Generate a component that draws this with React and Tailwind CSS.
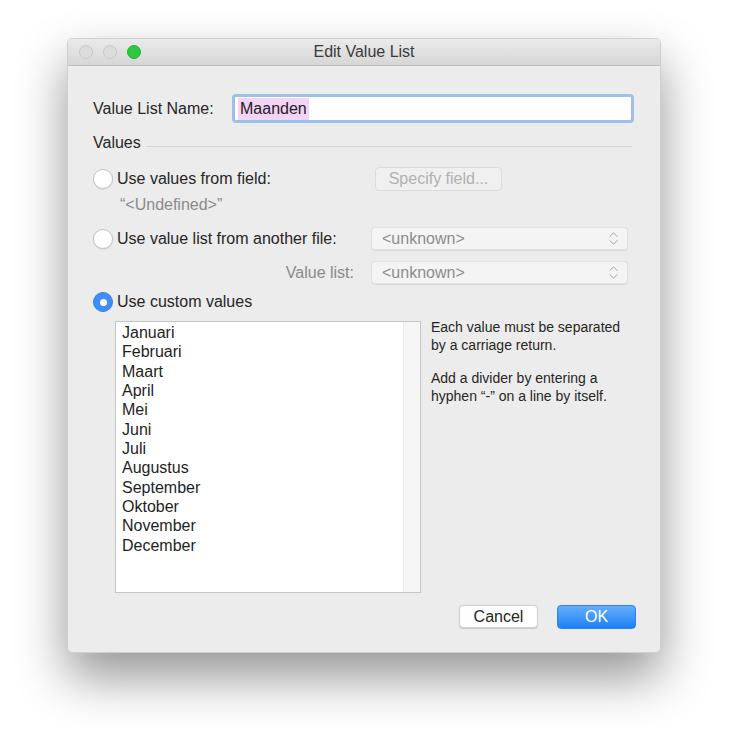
import { ChevronsUpDown } from 'lucide-react'

const months = [
  'Januari', 'Februari', 'Maart', 'April', 'Mei', 'Juni', 'Juli',
  'Augustus', 'September', 'Oktober', 'November', 'December',
]

/* ─── Radio button ─────────────────────────────────────────────────────── */
function Radio({ checked, label }) {
  return (
    <div className="flex items-center gap-[4px]">
      {checked ? (
        <span className="w-[20px] h-[20px] rounded-full bg-[#3d8ef5] border border-[#3582e8] flex items-center justify-center">
          <span className="w-[7px] h-[7px] rounded-full bg-white" />
        </span>
      ) : (
        <span className="w-[20px] h-[20px] rounded-full bg-white border border-[#c4c4c4] shadow-[0_0.5px_1px_rgba(0,0,0,0.12)]" />
      )}
      <span className="text-[16px] leading-[22px] text-[#262626]">{label}</span>
    </div>
  )
}

/* ─── Popup menu ───────────────────────────────────────────────────────── */
function Popup() {
  return (
    <div className="w-[257px] h-[23px] rounded-[4px] bg-[#f4f4f4] border border-[#e2e2e2] shadow-[0_0.5px_1px_rgba(0,0,0,0.08)] flex items-center justify-between pl-[10px] pr-[5px]">
      <span className="text-[16px] leading-[22px] text-[#8c8c8c]">&lt;unknown&gt;</span>
      <ChevronsUpDown size={17} strokeWidth={1.4} className="text-[#a0a0a0]" />
    </div>
  )
}

export default function App() {
  return (
    <div
      className="w-[729px] h-[750px] bg-white pt-[38px] pl-[67px]"
      style={{ fontFamily: '"Liberation Sans", Arial, sans-serif' }}
    >
      <div className="w-[594px] h-[615px] rounded-[5px] bg-[#ececec] border border-[#cfcfcf] shadow-[0_24px_50px_rgba(0,0,0,0.42)] overflow-hidden flex flex-col">
        {/* title bar */}
        <div className="h-[27px] bg-gradient-to-b from-[#ebebeb] to-[#d6d6d6] border-b border-[#bdbdbd] flex items-center relative">
          <div className="flex gap-[10px] pl-[11px]">
            <span className="w-[14px] h-[14px] rounded-full bg-[#dcdcdc] border border-[#c8c8c8]" />
            <span className="w-[14px] h-[14px] rounded-full bg-[#dcdcdc] border border-[#c8c8c8]" />
            <span className="w-[14px] h-[14px] rounded-full bg-[#2ec840] border border-[#27b037]" />
          </div>
          <span className="absolute inset-0 flex items-center justify-center text-[16px] text-[#3b3b3b]">
            Edit Value List
          </span>
        </div>

        {/* body */}
        <div className="flex-1 pl-[25px] pr-[26px] flex flex-col">
          {/* name row */}
          <div className="mt-[28px] flex items-center">
            <span className="w-[139px] text-[16px] leading-[22px] text-[#262626]">Value List Name:</span>
            <div className="flex-1 h-[29px] rounded-[4px] border-[3px] border-[#9dc0eb] bg-white flex items-center pl-[3px]">
              <span className="bg-[#f3d3f6] text-[16px] text-[#222] px-[2px] leading-[22px]">Maanden</span>
            </div>
          </div>

          {/* values heading */}
          <div className="mt-[9px] flex items-center gap-[6px]">
            <span className="text-[16px] leading-[22px] text-[#262626]">Values</span>
            <span className="flex-1 h-px bg-[#d2d2d2] mt-[6px] mr-[2px]" />
          </div>

          {/* from field */}
          <div className="mt-[13px] flex items-center h-[24px]">
            <div className="w-[282px]">
              <Radio label="Use values from field:" />
            </div>
            <div className="w-[127px] h-[24px] rounded-[4px] bg-[#f0f0f0] border border-[#dcdcdc] flex items-center justify-center text-[16px] text-[#b0b0b0]">
              Specify field...
            </div>
          </div>
          <div className="mt-[3px] pl-[27px] text-[16px] leading-[22px] text-[#8a8a8a]">“&lt;Undefined&gt;”</div>

          {/* another file */}
          <div className="mt-[11px] flex items-center justify-between h-[23px]">
            <Radio label="Use value list from another file:" />
            <div className="mr-[6px]">
              <Popup />
            </div>
          </div>
          <div className="mt-[11px] flex items-center justify-end h-[23px] pr-[6px] gap-[17px]">
            <span className="text-[16px] leading-[22px] text-[#8a8a8a]">Value list:</span>
            <Popup />
          </div>

          {/* custom values */}
          <div className="mt-[7px] h-[22px] flex items-center">
            <Radio checked label="Use custom values" />
          </div>
          <div className="mt-[8px] flex gap-[10px]">
            <div className="ml-[22px] w-[306px] h-[272px] bg-white border border-[#c6c6c6] flex">
              <div className="flex-1 pl-[6px] pt-[1px] flex flex-col">
                {months.map((m) => (
                  <span key={m} className="text-[16px] leading-[19.35px] text-[#1e1e1e]">
                    {m}
                  </span>
                ))}
              </div>
              <div className="w-[17px] bg-[#f6f6f6] border-l border-[#ebebeb]" />
            </div>
            <div className="-mt-[3px] text-[14px] leading-[18px] text-[#262626]">
              <p>Each value must be separated</p>
              <p>by a carriage return.</p>
              <p className="mt-[15px]">Add a divider by entering a</p>
              <p>hyphen “-” on a line by itself.</p>
            </div>
          </div>

          {/* buttons */}
          <div className="mt-[12px] mr-[-2px] flex justify-end gap-[19px]">
            <button className="w-[79px] h-[23px] rounded-[4px] bg-white border border-[#d0d0d0] shadow-[0_0.5px_1px_rgba(0,0,0,0.15)] text-[16px] leading-[20px] text-[#262626]">
              Cancel
            </button>
            <button className="w-[79px] h-[24px] rounded-[4px] bg-gradient-to-b from-[#63aefc] to-[#1b7ff6] border border-[#2a84ef] text-[16px] leading-[20px] text-white">
              OK
            </button>
          </div>
        </div>
      </div>
    </div>
  )
}
